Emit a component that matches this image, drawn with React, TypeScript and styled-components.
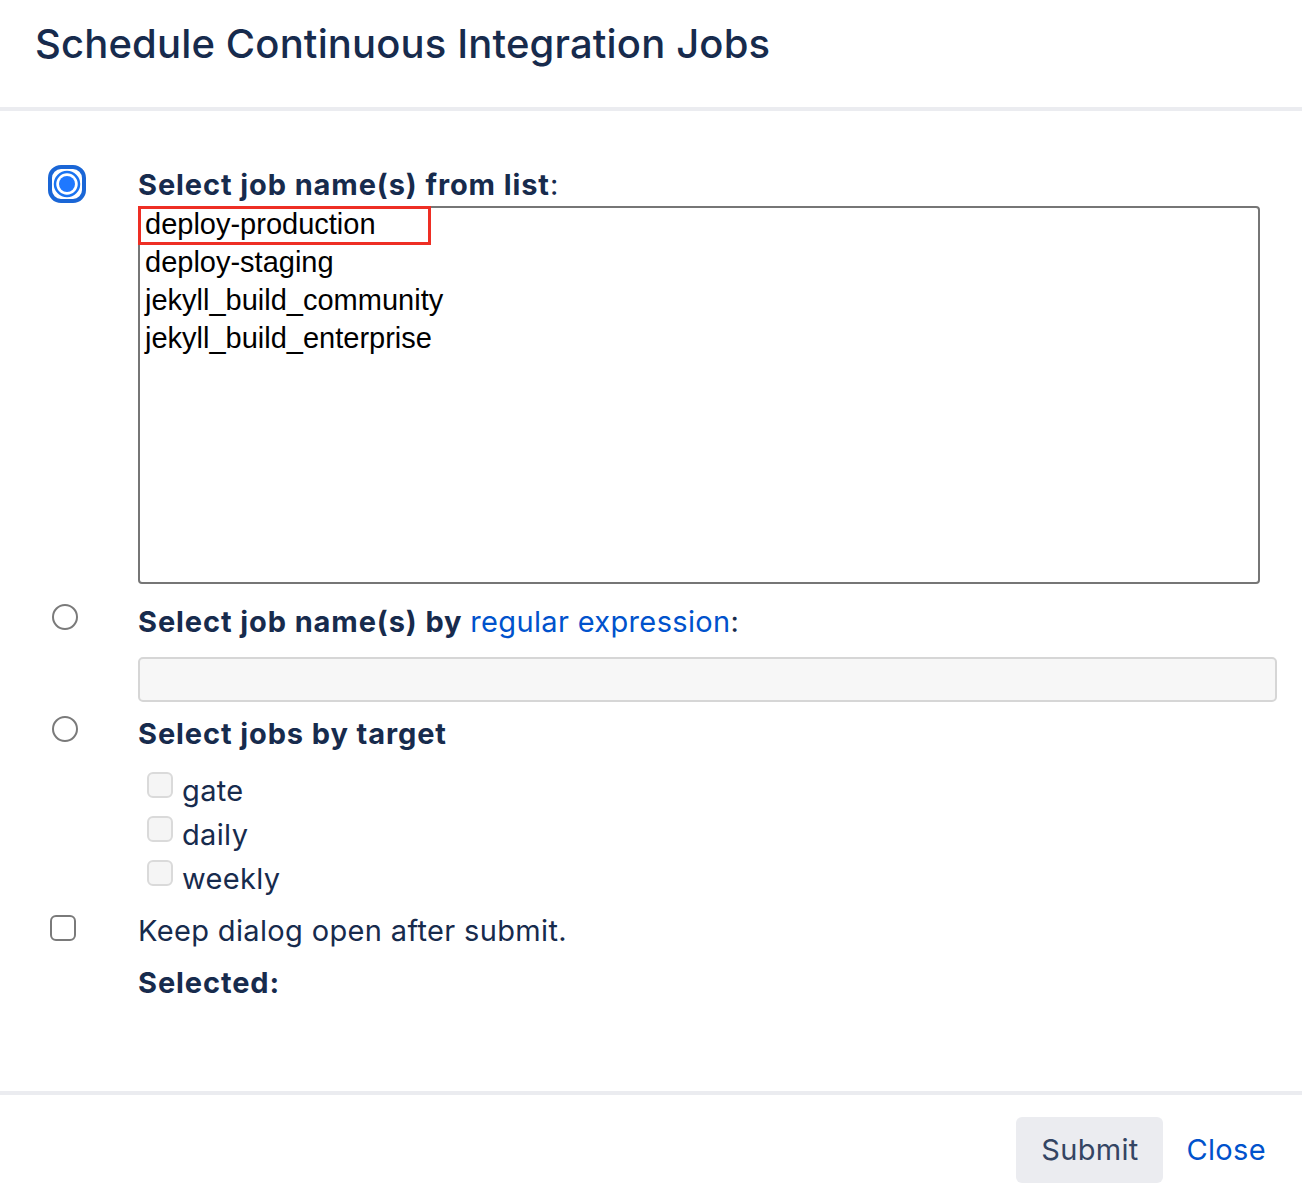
import React from "react";
import styled, { createGlobalStyle } from "styled-components";

const Global = createGlobalStyle`
  html, body { margin: 0; padding: 0; background: #fff; }
  body { font-family: Inter, "Liberation Sans", sans-serif; color: #172B4D; }
`;

const Dialog = styled.div`
  width: 1302px;
  height: 1200px;
  display: flex;
  flex-direction: column;
  background: #fff;
`;

const Header = styled.header`
  padding: 0 35px;
  display: flex;
  align-items: flex-start;
  border-bottom: 4px solid #EBECF0;
  box-sizing: border-box;
  height: 111px;
`;

const Title = styled.h1`
  margin: 16px 0 0;
  font-size: 40px;
  line-height: 56px;
  font-weight: 500;
  color: #172B4D;
  letter-spacing: 0.15px;
`;

const Body = styled.main`
  flex: 1;
  padding: 54px 24px 0 35px;
  display: grid;
  grid-template-columns: 103px 1fr;
  align-content: start;
`;

const RadioCell = styled.div<{ $top: number }>`
  padding-top: ${(p) => p.$top}px;
  padding-left: 13px;
`;

const Content = styled.div<{ $gap?: number }>`
  display: flex;
  flex-direction: column;
  padding-bottom: ${(p) => p.$gap ?? 0}px;
`;

const Label = styled.div`
  font-size: 29px;
  line-height: 40px;
  font-weight: 700;
  letter-spacing: 0.9px;
  color: #172B4D;
`;

const Normal = styled.span`
  font-weight: 400;
  letter-spacing: 0.35px;
`;

const Link = styled.a`
  color: #0052CC;
  font-weight: 400;
  letter-spacing: 0.35px;
  text-decoration: none;
`;

const ListBox = styled.div`
  width: 1122px;
  height: 378px;
  box-sizing: border-box;
  border: 2px solid #767676;
  border-radius: 4px;
  margin-top: 1px;
  position: relative;
  font-family: "Liberation Sans", Arial, sans-serif;
  font-size: 29px;
  color: #000;
`;

const Option = styled.div`
  height: 38px;
  line-height: 33px;
  padding-left: 5px;
  position: relative;
`;

const FocusRing = styled.span`
  position: absolute;
  left: -2px;
  top: -2px;
  width: 293px;
  height: 39px;
  border: 3px solid #EE2E24;
  box-sizing: border-box;
  pointer-events: none;
`;

const TextInput = styled.div`
  width: 1139px;
  height: 45px;
  box-sizing: border-box;
  background: #F7F7F7;
  border: 2px solid #D6D6D6;
  border-radius: 5px;
  margin-top: 15px;
`;

const Radio = styled.span`
  display: block;
  width: 26px;
  height: 26px;
  box-sizing: border-box;
  border: 2px solid #7A7A7A;
  border-radius: 50%;
  background: #fff;
  margin-left: 4px;
`;

const CheckList = styled.div`
  display: flex;
  flex-direction: column;
  margin-top: 14px;
  padding-left: 9px;
`;

const CheckRow = styled.label`
  display: flex;
  align-items: center;
  gap: 9px;
  height: 44px;
  font-size: 29px;
  letter-spacing: 0.35px;
  color: #172B4D;
`;

const Check = styled.span<{ $disabled?: boolean }>`
  display: block;
  width: 26px;
  height: 26px;
  box-sizing: border-box;
  border-radius: 6px;
  border: 2px solid ${(p) => (p.$disabled ? "#DADADA" : "#7A7A7A")};
  background: ${(p) => (p.$disabled ? "#F5F5F5" : "#fff")};
  margin-top: ${(p) => (p.$disabled ? -10 : 0)}px;
  margin-left: ${(p) => (p.$disabled ? 0 : 2)}px;
`;

const Text = styled.div`
  font-size: 29px;
  line-height: 40px;
  letter-spacing: 0.35px;
  color: #172B4D;
`;

const Footer = styled.footer`
  border-top: 4px solid #EBECF0;
  height: 109px;
  box-sizing: border-box;
  display: flex;
  align-items: center;
  justify-content: flex-end;
  gap: 23px;
  padding: 0 36px 0 0;
`;

const Button = styled.button`
  width: 147px;
  height: 66px;
  border: none;
  border-radius: 6px;
  background: #EBECF0;
  color: #344563;
  font-family: Inter, "Liberation Sans", sans-serif;
  font-size: 29px;
  letter-spacing: 0.35px;
  margin-top: 4px;
`;

const CloseLink = styled.a`
  color: #0052CC;
  font-size: 29px;
  letter-spacing: 0.35px;
  margin-top: 4px;
`;

const SelectedRadio = () => (
  <svg width="38" height="38" viewBox="0 0 38 38" style={{ display: "block" }}>
    <rect x="2" y="2" width="34" height="34" rx="11" fill="none" stroke="#1A66D6" strokeWidth="4" />
    <circle cx="19" cy="19" r="12" fill="none" stroke="#1A73F0" strokeWidth="2.5" />
    <circle cx="19" cy="19" r="8" fill="#1F78FF" />
  </svg>
);

const jobs = ["deploy-production", "deploy-staging", "jekyll_build_community", "jekyll_build_enterprise"];

export default function App() {
  return (
    <Dialog>
      <Global />
      <Header>
        <Title>Schedule Continuous Integration Jobs</Title>
      </Header>
      <Body>
        <RadioCell $top={0}>
          <SelectedRadio />
        </RadioCell>
        <Content $gap={18}>
          <Label>
            Select job name(s) from list<Normal>:</Normal>
          </Label>
          <ListBox>
            {jobs.map((j, i) => (
              <Option key={j}>
                {j}
                {i === 0 && <FocusRing />}
              </Option>
            ))}
          </ListBox>
        </Content>

        <RadioCell $top={2}>
          <Radio />
        </RadioCell>
        <Content $gap={12}>
          <Label>
            Select job name(s) by <Link href="#">regular expression</Link>
            <Normal>:</Normal>
          </Label>
          <TextInput />
        </Content>

        <RadioCell $top={2}>
          <Radio />
        </RadioCell>
        <Content $gap={11}>
          <Label>Select jobs by target</Label>
          <CheckList>
            {["gate", "daily", "weekly"].map((t) => (
              <CheckRow key={t}>
                <Check $disabled />
                {t}
              </CheckRow>
            ))}
          </CheckList>
        </Content>

        <RadioCell $top={4}>
          <Check />
        </RadioCell>
        <Content $gap={12}>
          <Text>Keep dialog open after submit.</Text>
        </Content>

        <div />
        <Content>
          <Label>Selected:</Label>
        </Content>
      </Body>
      <Footer>
        <Button>Submit</Button>
        <CloseLink>Close</CloseLink>
      </Footer>
    </Dialog>
  );
}
